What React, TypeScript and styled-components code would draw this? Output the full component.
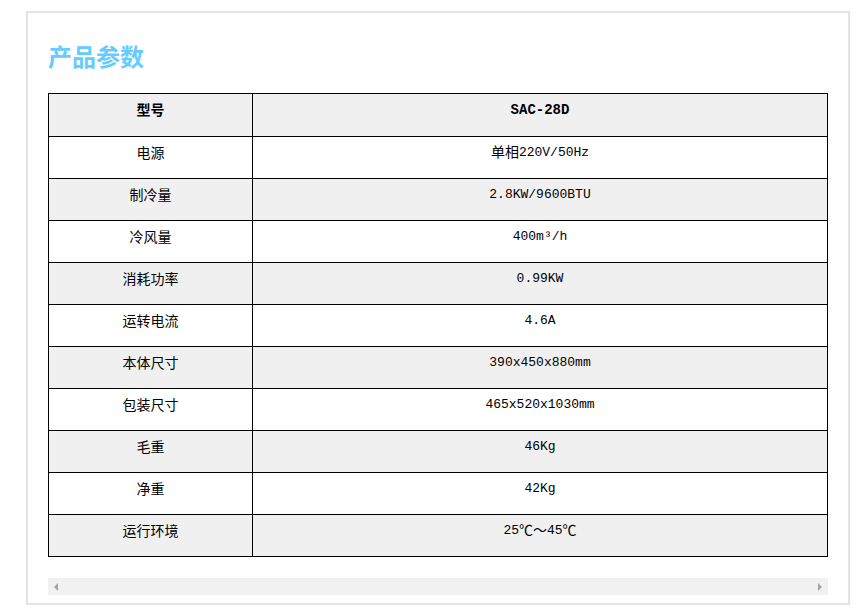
import React from "react";
import styled, { createGlobalStyle } from "styled-components";

const GlobalStyle = createGlobalStyle`
  html, body { margin: 0; padding: 0; background: #ffffff; }
  body { font-family: "Noto Sans CJK SC", "Noto Sans", sans-serif; }
`;

const Page = styled.div`
  padding: 11px 0 0 26px;
`;

const Frame = styled.section`
  box-sizing: border-box;
  width: 824px;
  height: 594px;
  border: 2px solid #e3e3e3;
  padding: 28px 20px 0 20px;
  display: flex;
  flex-direction: column;
`;

const Title = styled.h2`
  margin: 0;
  font-family: "Noto Sans CJK SC", sans-serif;
  font-size: 24px;
  line-height: 30px;
  font-weight: 700;
  color: #66ccff;
`;

const Table = styled.table`
  margin-top: 22px;
  width: 779px;
  border-collapse: collapse;
  table-layout: fixed;
`;

const Row = styled.tr<{ $shaded: boolean; $head?: boolean }>`
  background: ${(p) => (p.$shaded ? "#f0f0f0" : "#ffffff")};
  height: ${(p) => (p.$head ? "43px" : "42px")};
`;

const Cell = styled.td<{ $bold?: boolean; $latin?: boolean }>`
  border: 1px solid #000;
  padding: ${(p) => (p.$latin ? "6px" : "5px")} 0 0;
  line-height: 20px;
  vertical-align: top;
  text-align: center;
  color: #000;
  overflow: hidden;
  font-weight: ${(p) => (p.$bold ? 700 : 400)};
  font-family: ${(p) =>
    p.$latin
      ? '"Liberation Mono", "Noto Sans CJK SC", monospace'
      : '"Noto Sans CJK SC", sans-serif'};
  font-size: ${(p) => (p.$latin ? (p.$bold ? "14px" : "13px") : "14px")};
`;

const Cjk = styled.span`
  font-family: "Noto Sans CJK SC", sans-serif;
  font-size: 14px;
  line-height: 1;
  vertical-align: -1px;
`;

const ScrollBar = styled.div`
  margin-top: 21px;
  width: 780px;
  height: 17px;
  background: #f1f1f1;
  display: flex;
  align-items: center;
  justify-content: space-between;
  padding: 0 6px;
  box-sizing: border-box;
`;

const Arrow = styled.span<{ $dir: "left" | "right" }>`
  width: 0;
  height: 0;
  border-top: 4px solid transparent;
  border-bottom: 4px solid transparent;
  ${(p) =>
    p.$dir === "left"
      ? "border-right: 4px solid #a3a3a3;"
      : "border-left: 4px solid #a3a3a3;"}
`;

type Spec = { label: string; value: React.ReactNode };

const rows: Spec[] = [
  { label: "电源", value: (<><Cjk>单相</Cjk>220V/50Hz</>) },
  { label: "制冷量", value: "2.8KW/9600BTU" },
  { label: "冷风量", value: "400m³/h" },
  { label: "消耗功率", value: "0.99KW" },
  { label: "运转电流", value: "4.6A" },
  { label: "本体尺寸", value: "390x450x880mm" },
  { label: "包装尺寸", value: "465x520x1030mm" },
  { label: "毛重", value: "46Kg" },
  { label: "净重", value: "42Kg" },
  { label: "运行环境", value: (<>25<Cjk>℃～</Cjk>45<Cjk>℃</Cjk></>) },
];

export default function App() {
  return (
    <>
      <GlobalStyle />
      <Page>
        <Frame>
          <Title>产品参数</Title>
          <Table>
            <colgroup>
              <col style={{ width: 204 }} />
              <col style={{ width: 575 }} />
            </colgroup>
            <tbody>
              <Row $shaded $head>
                <Cell $bold>型号</Cell>
                <Cell $bold $latin>SAC-28D</Cell>
              </Row>
              {rows.map((r, i) => (
                <Row key={r.label} $shaded={i % 2 === 1}>
                  <Cell>{r.label}</Cell>
                  <Cell $latin>{r.value}</Cell>
                </Row>
              ))}
            </tbody>
          </Table>
          <ScrollBar>
            <Arrow $dir="left" />
            <Arrow $dir="right" />
          </ScrollBar>
        </Frame>
      </Page>
    </>
  );
}
